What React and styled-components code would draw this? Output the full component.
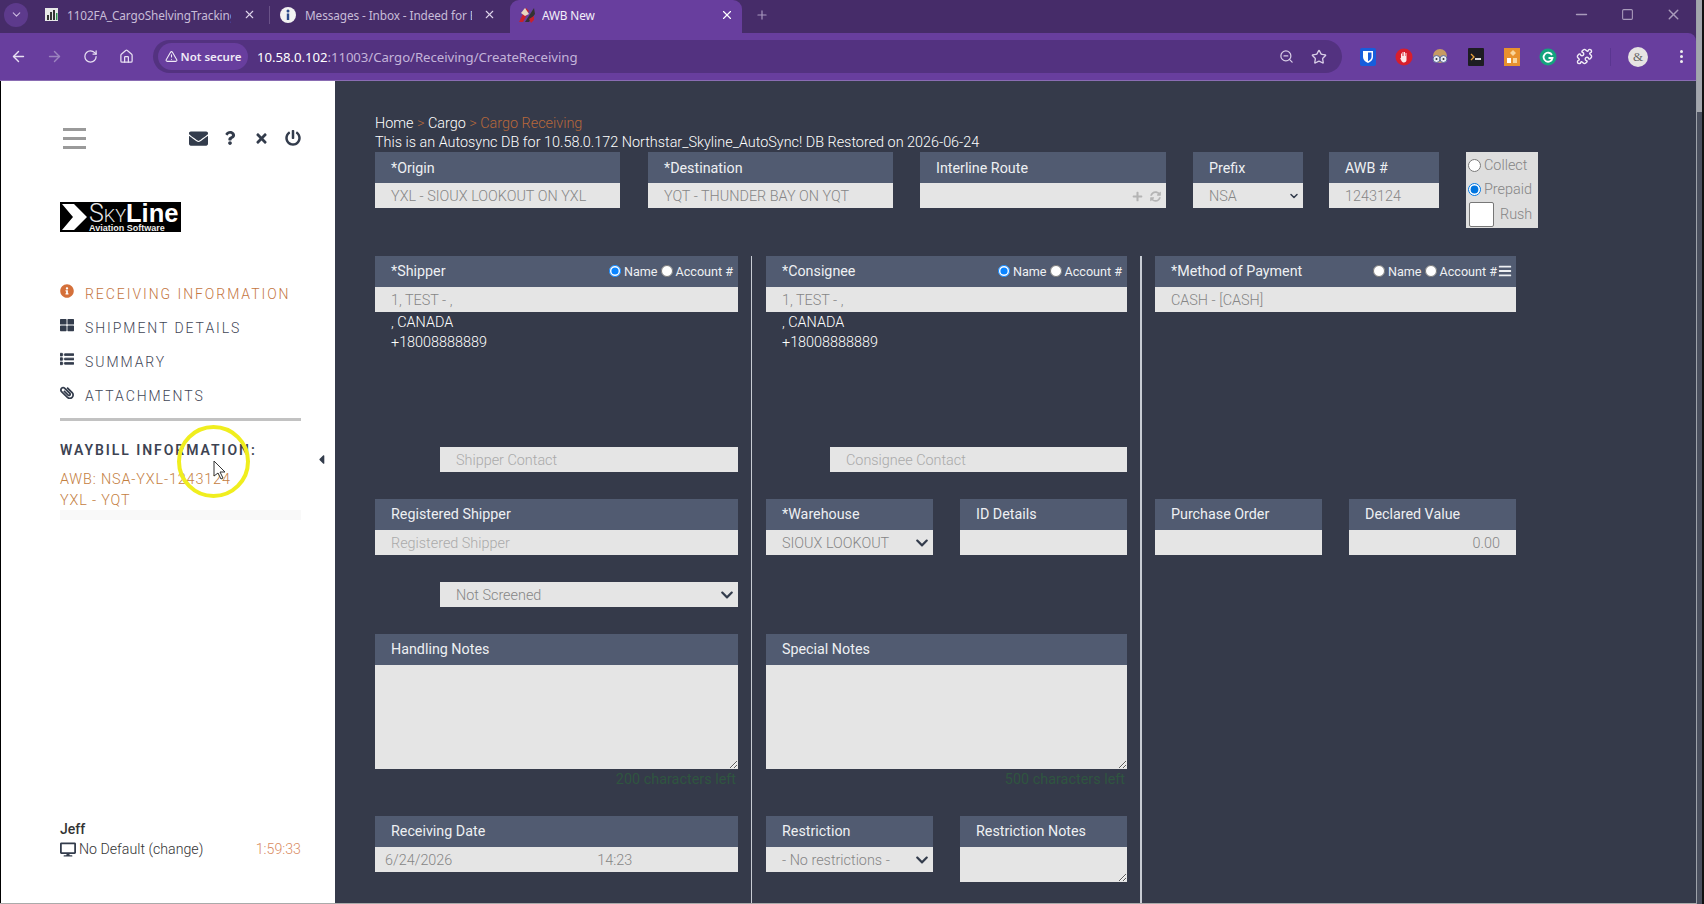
import React from 'react';
import styled, { createGlobalStyle } from 'styled-components';
import {
  FaEnvelope, FaQuestion, FaTimes, FaPowerOff, FaInfoCircle, FaThLarge, FaList, FaPaperclip,
  FaDesktop, FaCaretLeft, FaBars, FaPlus, FaSyncAlt, FaChevronDown,
} from 'react-icons/fa';
import { LuArrowLeft, LuArrowRight, LuRotateCw, LuHouse, LuTriangleAlert, LuZoomOut, LuStar, LuPuzzle, LuX, LuMinus, LuSquare, LuPlus, LuChevronDown } from 'react-icons/lu';

const Global = createGlobalStyle`
  html, body { margin: 0; padding: 0; width: 1704px; height: 904px; overflow: hidden; background: #353a4a; }
  * { box-sizing: border-box; }
  body { font-family: Roboto, "Liberation Sans", sans-serif; }
`;

const Screen = styled.div`
  width: 1704px;
  height: 904px;
  display: flex;
  position: relative;
`;

const Shell = styled.div`
  flex: 1;
  min-width: 0;
  display: flex;
  flex-direction: column;
  background: #462c69;
`;

const ScreenEdge = styled.div`
  width: 8px;
  flex: none;
  background: #4a4f5e;
  border-left: 1px solid #9ea2aa;
  border-right: 2px solid #111;
`;

const EdgeThumb = styled.div`
  height: 112px;
  background: #a3a6ad;
`;

/* browser chrome */
const TabStrip = styled.div`
  height: 33px;
  background: #462c69;
  display: flex;
  align-items: center;
  padding-left: 4px;
  font-family: "Noto Sans", sans-serif;
  font-size: 11.8px;
  color: #d6cbe2;
`;

const TabSearch = styled.div`
  width: 24px;
  height: 24px;
  border-radius: 50%;
  background: #5d3a8c;
  color: #cbb9e0;
  display: flex;
  align-items: center;
  justify-content: center;
  margin: 0 11px 4px 0;
`;

const Tab = styled.div`
  width: ${p => p.$w}px;
  height: 33px;
  display: flex;
  align-items: center;
  padding: 0 0 4px ${p => p.$pl || 4}px;
  background: ${p => (p.$active ? '#683e9e' : 'transparent')};
  color: ${p => (p.$active ? '#f3eefa' : '#c8bcd8')};
  border-radius: ${p => (p.$active ? '9px 9px 0 0' : '0')};
`;

const TabSep = styled.div`
  width: 1px;
  height: 18px;
  margin-bottom: 4px;
  background: #6a5288;
  flex: none;
`;

const TabTitle = styled.span`
  flex: 1;
  margin-left: ${p => p.$ml || 8}px;
  margin-right: ${p => p.$mr || 0}px;
  white-space: nowrap;
  overflow: hidden;
  letter-spacing: -0.1px;
`;

const TabClose = styled.span`
  display: flex;
  margin-right: ${p => p.$mr || 10}px;
  color: ${p => (p.$active ? '#fff' : '#ddd3ea')};
`;

const NewTab = styled.span`
  display: flex;
  margin: 0 0 4px 13px;
  color: #a898bf;
`;

const WindowControls = styled.div`
  margin: 0 0 4px auto;
  display: flex;
  align-items: center;
  gap: 31px;
  padding-right: 14px;
  color: #a99bbb;
`;

const Toolbar = styled.div`
  height: 48px;
  background: #683e9e;
  border-bottom: 1px solid #8a6cb3;
  border-top-right-radius: 8px;
  display: flex;
  align-items: center;
  padding: 0 12px 0 10px;
  color: #e8e0f2;
  font-family: "Noto Sans", sans-serif;
`;

const NavIcons = styled.div`
  display: flex;
  align-items: center;
  gap: 19px;
  width: 143px;
`;

const NavBtn = styled.span`
  width: 17px;
  display: flex;
  justify-content: center;
  color: ${p => (p.$dim ? '#9c84bf' : 'inherit')};
`;

const Omnibox = styled.div`
  width: 1189px;
  height: 33px;
  border-radius: 17px;
  background: #533280;
  display: flex;
  align-items: center;
  padding: 0 15px 0 5px;
`;

const SecurePill = styled.div`
  height: 27px;
  width: 90px;
  border-radius: 14px;
  background: #683e9e;
  display: flex;
  align-items: center;
  justify-content: center;
  gap: 3px;
  font-size: 11.5px;
  font-weight: 600;
  color: #f0eaf7;
`;

const Url = styled.div`
  margin-left: 9px;
  font-size: 13.2px;
  letter-spacing: -0.05px;
  color: #c4b4da;
  flex: 1;
  b { font-weight: 400; color: #fff; }
`;

const OmniIcons = styled.div`
  display: flex;
  align-items: center;
  gap: 17px;
  color: #d8cde6;
`;

const Extensions = styled.div`
  margin-left: 17px;
  display: flex;
  align-items: center;
  gap: 18px;
`;

const Ext = styled.div`
  width: 18px;
  height: 18px;
  display: flex;
  align-items: center;
  justify-content: center;
`;

const ToolSep = styled.div`
  width: 1px;
  height: 18px;
  background: #5a3690;
  margin: 0 17px;
`;

const Avatar = styled.div`
  width: 20px;
  height: 20px;
  border-radius: 50%;
  background: #e6e3e3;
  color: #666;
  font-size: 13px;
  text-align: center;
  line-height: 20px;
  margin-right: 32px;
  font-family: "Liberation Serif", serif;
`;

const Kebab = styled.div`
  display: flex;
  flex-direction: column;
  gap: 2px;
  i { width: 3px; height: 3px; border-radius: 50%; background: #eee; display: block; }
`;

/* page */
const Page = styled.div`
  flex: 1;
  min-height: 0;
  display: flex;
  border-bottom: 1px solid #aaa;
`;

const Sidebar = styled.aside`
  width: 335px;
  background: #fff;
  border-left: 1px solid #000;
  padding: 42px 34px 44px 59px;
  display: flex;
  flex-direction: column;
  position: relative;
`;

const TopIcons = styled.div`
  height: 30px;
  display: flex;
  align-items: center;
  color: #333c4c;
`;

const Hamburger = styled.div`
  width: 23px;
  margin: 0 auto 0 3px;
  display: flex;
  flex-direction: column;
  gap: 6px;
  i { height: 3px; background: #9a9a9a; display: block; }
`;

const IconSlot = styled.span`
  display: flex;
  margin-left: ${p => p.$ml || 0}px;
  font-size: ${p => p.$size}px;
`;

const Logo = styled.div`
  width: 121px;
  height: 30px;
  margin-top: 49px;
  background: #000;
  color: #fff;
  display: flex;
  svg { flex: none; margin-left: 1px; }
`;

const LogoText = styled.div`
  font-family: "Liberation Sans", sans-serif;
  margin: 1px 0 0 -1px;
  display: flex;
  flex-direction: column;
`;

const LogoName = styled.div`
  height: 21px;
  display: flex;
  align-items: baseline;
  font-family: Roboto, sans-serif;
  font-weight: 300;
  font-size: 18px;
  line-height: 21px;
  color: #e8e8e8;
  big { font-size: 25px; font-weight: 300; line-height: 21px; }
  b { font-family: "Liberation Sans", sans-serif; font-size: 25.5px; line-height: 21px; font-weight: 700; color: #fff; }
`;

const LogoSub = styled.div`
  font-size: 9px;
  line-height: 8px;
  font-weight: 700;
  color: #eee;
  white-space: nowrap;
`;

const Nav = styled.nav`
  margin-top: 52px;
  display: flex;
  flex-direction: column;
  gap: 14px;
`;

const NavItem = styled.div`
  height: 20px;
  display: flex;
  align-items: center;
  font-size: 14px;
  font-weight: 300;
  letter-spacing: 1.95px;
  color: ${p => (p.$active ? '#c4763f' : '#3f4656')};
  svg { color: ${p => (p.$active ? '#d4703a' : '#333c4c')}; flex: none; width: 14px; height: 14px; margin-right: 11px; position: relative; top: -3px; }
`;

const Clip = styled(FaPaperclip)`
  transform: rotate(-90deg);
`;

const HeavyList = styled(FaList)`
  stroke: currentColor;
  stroke-width: 30;
`;

const Rule = styled.hr`
  margin: 12px 0 0;
  border: 0;
  height: 3px;
  background: #c2c2c2;
`;

const WaybillTitle = styled.div`
  margin-top: 21px;
  font-size: 14px;
  font-weight: 600;
  letter-spacing: 1.95px;
  color: #3d4352;
  white-space: nowrap;
`;

const WaybillLine = styled.div`
  font-size: 14.4px;
  line-height: 21px;
  font-weight: 300;
  letter-spacing: 0.85px;
  color: #c4803f;
`;

const WaybillLines = styled.div`
  margin-top: 11px;
`;

const FaintBar = styled.div`
  height: 10px;
  margin-top: -1px;
  background: #f9f9f9;
`;

const Footer = styled.div`
  margin-top: auto;
`;

const UserName = styled.div`
  font-size: 14px;
  font-weight: 500;
  color: #333;
  line-height: 20px;
`;

const StationRow = styled.div`
  display: flex;
  align-items: center;
  font-size: 14.2px;
  font-weight: 300;
  line-height: 20px;
  color: #333;
  svg { width: 16px; height: 15px; margin-right: 3px; color: #333c4c; }
`;

const Timer = styled.span`
  margin-left: auto;
  color: #d98b5f;
`;

const Collapse = styled.div`
  position: absolute;
  left: 313px;
  top: 371px;
  display: flex;
  color: #333c4c;
  font-size: 15px;
`;

const Highlight = styled.div`
  position: absolute;
  left: 177px;
  top: 425px;
  width: 73px;
  height: 73px;
  border-radius: 50%;
  border: 4px solid #f0ee1e;
  pointer-events: none;
`;

const Pointer = styled.svg`
  position: absolute;
  left: 213px;
  top: 460px;
`;

const Main = styled.main`
  flex: 1;
  background: #353a4a;
  padding: 33px 0 0 40px;
  display: flex;
  flex-direction: column;
  color: #fff;
  font-size: 14.4px;
  font-weight: 300;
`;

const Crumbs = styled.div`
  line-height: 20px;
  span { color: #b8683a; }
`;

const Notice = styled.div`
  line-height: 18px;
  white-space: nowrap;
`;

const TopRow = styled.div`
  display: flex;
  align-items: flex-start;
  height: 76px;
  margin-bottom: 28px;
`;

const Field = styled.div`
  width: ${p => (p.$w ? `${p.$w}px` : 'auto')};
  flex: ${p => (p.$w ? 'none' : '1')};
  margin-left: ${p => p.$ml || 0}px;
`;

const FieldHead = styled.div`
  height: 31px;
  background: #515b71;
  color: #eef0f3;
  display: flex;
  align-items: center;
  padding: ${p => (p.$low ? '1px' : '0')} 5px ${p => (p.$low ? '0' : '1px')} 16px;
  font-weight: 400;
  font-size: 14.3px;
`;

const FieldLabel = styled.span`
  margin-right: auto;
`;

const FieldValue = styled.div`
  height: 25px;
  background: #e5e5e5;
  display: flex;
  align-items: center;
  padding: 1px ${p => p.$pr || 0}px 0 ${p => p.$pl || 16}px;
  color: ${p => (p.$faint ? '#aaa' : '#868686')};
  font-size: 14.4px;
  font-weight: 300;
  justify-content: ${p => (p.$right ? 'flex-end' : 'flex-start')};
  white-space: nowrap;
`;

const FieldTrail = styled.span`
  margin-left: auto;
  display: flex;
  align-items: center;
  gap: 7px;
  color: ${p => p.$color || '#333c4c'};
  font-size: ${p => p.$size || 14}px;
`;

const DateTime = styled.span`
  margin-left: ${p => p.$ml}px;
`;

const ChoiceBox = styled.div`
  width: 72px;
  height: 76px;
  margin-left: 27px;
  background: #dedede;
  color: #858585;
  font-size: 14.4px;
  padding: 1px 0 0 2px;
`;

const ChoiceRow = styled.label`
  display: flex;
  align-items: center;
  height: 24px;
  gap: 3px;
  input { margin: 0; width: 13px; height: 13px; accent-color: #0075e0; }
`;

const RushBox = styled.input`
  width: 25px;
  height: 25px;
  margin: 1px 6px 0 1px;
  appearance: none;
  background: #fff;
  border: 1px solid #777;
  border-radius: 2px;
`;

const RushRow = styled.div`
  display: flex;
  align-items: center;
  height: 26px;
`;

const Columns = styled.div`
  flex: 1;
  display: flex;
  align-items: stretch;
`;

const Column = styled.div`
  width: ${p => p.$w}px;
  padding: 0 ${p => p.$pr || 0}px 0 ${p => p.$pl || 0}px;
  border-right: ${p => (p.$line ? `${p.$line}px solid #c8ccd4` : '0')};
  box-sizing: content-box;
`;

const Radios = styled.div`
  display: flex;
  align-items: center;
  font-size: 12.6px;
  font-weight: 400;
  color: #eef0f3;
`;

const Radio = styled.input`
  width: 12px;
  height: 12px;
  margin: 0 3px 0 ${p => p.$ml || 0}px;
  accent-color: #0a84ff;
`;

const BarsIcon = styled.span`
  display: flex;
  margin: 0 -1px 0 1px;
`;

const Address = styled.div`
  height: 40px;
  padding: 1px 0 0 16px;
  line-height: 20px;
  font-weight: 300;
  font-size: 14.4px;
`;

const Indented = styled.div`
  margin: ${p => p.$top || 0}px 0 0 auto;
  width: ${p => p.$w}px;
`;

const Row = styled.div`
  display: flex;
  gap: 27px;
  margin-top: ${p => p.$top || 0}px;
`;

const Block = styled.div`
  margin-top: ${p => p.$top || 0}px;
`;

const Notes = styled.textarea`
  display: block;
  width: 100%;
  height: ${p => p.$h}px;
  background: #e5e5e5;
  border: 0;
  border-radius: 0;
  outline: 0;
  margin: 0;
  resize: vertical;
`;

const CharsLeft = styled.div`
  height: 20px;
  line-height: 21px;
  padding-right: 2px;
  text-align: right;
  font-size: 14.4px;
  font-weight: 400;
  color: #2f5540;
`;

const BitwardenIcon = () => (
  <svg width="16" height="18" viewBox="0 0 16 18">
    <rect width="16" height="18" rx="2" fill="#175ddc" />
    <path d="M3 3h10v6c0 3-2.5 5-5 6-2.500-1-5-3-5-6z" fill="#fff" />
    <path d="M8 4.500h3.500V9c0 2-1.800 3.300-3.500 4.200z" fill="#175ddc" />
  </svg>
);

const BlockerIcon = () => (
  <svg width="18" height="18" viewBox="0 0 18 18">
    <circle cx="9" cy="9" r="8.500" fill="#d81e2c" />
    <path d="M6 9V5.500h1V8h.5V4h1v4H9V4h1v4h.5V5h1v7c0 1.500-1 2.500-2.500 2.500-1.300 0-2-.6-2.600-1.800L5 10l1 .2z" fill="#fde8e8" />
  </svg>
);

const OwlIcon = () => (
  <svg width="18" height="18" viewBox="0 0 18 18">
    <circle cx="9" cy="8" r="7" fill="#c79a63" />
    <circle cx="5.500" cy="11" r="3.500" fill="#e8eaf2" stroke="#5a6a9a" />
    <circle cx="12.500" cy="11" r="3.500" fill="#e8eaf2" stroke="#5a6a9a" />
    <circle cx="5.500" cy="11" r="1" fill="#333" />
    <circle cx="12.500" cy="11" r="1" fill="#333" />
  </svg>
);

const TerminalIcon = () => (
  <svg width="16" height="18" viewBox="0 0 16 18">
    <rect width="16" height="18" rx="1" fill="#1d1d22" />
    <path d="M3 6l3 3-3 3" stroke="#e8a23c" strokeWidth="1.300" fill="none" />
    <rect x="7" y="10" width="6" height="2" fill="#ddd" />
  </svg>
);

const OrangeIcon = () => (
  <svg width="16" height="18" viewBox="0 0 16 18">
    <rect width="16" height="18" fill="#e8912d" />
    <path d="M9 2l3 3-3 3-3-3z" fill="#f9d59b" />
    <rect x="3" y="10" width="4" height="5" fill="#fff" />
    <rect x="9" y="10" width="4" height="5" fill="#f9d59b" />
  </svg>
);

const GrammarlyIcon = () => (
  <svg width="18" height="18" viewBox="0 0 18 18">
    <circle cx="9" cy="9" r="8.500" fill="#15a37e" />
    <path d="M13 7a4.500 4.500 0 1 0 .5 3H9.500" stroke="#fff" strokeWidth="1.800" fill="none" />
  </svg>
);

const SheetFavicon = () => (
  <svg width="15" height="15" viewBox="0 0 15 15">
    <rect x="1" y="1" width="13" height="13" fill="#e8e8e8" />
    <rect x="3" y="8" width="2" height="5" fill="#333" />
    <rect x="6" y="5" width="2" height="8" fill="#333" />
    <rect x="9" y="3" width="2" height="10" fill="#333" />
    <rect x="12" y="6" width="1.500" height="7" fill="#2f8f4e" />
  </svg>
);

const InfoFavicon = () => (
  <svg width="16" height="16" viewBox="0 0 16 16">
    <circle cx="8" cy="8" r="8" fill="#f2f2f2" />
    <circle cx="8" cy="4" r="1.500" fill="#2a4a8a" />
    <rect x="6.800" y="6.500" width="2.400" height="6.500" fill="#2a4a8a" />
  </svg>
);

const AwbFavicon = () => (
  <svg width="18" height="18" viewBox="0 0 18 18">
    <path d="M1 16L8 2l3 3-6 11z" fill="#c8202c" />
    <path d="M7 16l9-14 1 6-6 8z" fill="#333" />
    <path d="M3 7l4-5 4 6-4 2z" fill="#e8d8c0" />
    <path d="M11 13l5-3v4l-3 3z" fill="#c8202c" />
  </svg>
);

const App = () => (
  <Screen>
    <Global />
    <Shell>
      <TabStrip>
        <TabSearch><LuChevronDown size={13} /></TabSearch>
        <Tab $w={230} $pl={5}>
          <SheetFavicon />
          <TabTitle $mr={12}>1102FA_CargoShelvingTracking</TabTitle>
          <TabClose $mr={13}><LuX size={13} /></TabClose>
        </Tab>
        <TabSep />
        <Tab $w={240} $pl={10}>
          <InfoFavicon />
          <TabTitle $ml={9} $mr={11}>Messages - Inbox - Indeed for E</TabTitle>
          <TabClose $mr={14}><LuX size={13} /></TabClose>
        </Tab>
        <Tab $w={232} $pl={8} $active>
          <AwbFavicon />
          <TabTitle $ml={6}>AWB New</TabTitle>
          <TabClose $mr={8} $active><LuX size={14} /></TabClose>
        </Tab>
        <NewTab><LuPlus size={14} /></NewTab>
        <WindowControls>
          <LuMinus size={17} />
          <LuSquare size={13} />
          <LuX size={17} />
        </WindowControls>
      </TabStrip>
      <Toolbar>
        <NavIcons>
          <NavBtn><LuArrowLeft size={17} /></NavBtn>
          <NavBtn $dim><LuArrowRight size={17} /></NavBtn>
          <NavBtn><LuRotateCw size={15} /></NavBtn>
          <NavBtn><LuHouse size={15} /></NavBtn>
        </NavIcons>
        <Omnibox>
          <SecurePill><LuTriangleAlert size={13} />Not secure</SecurePill>
          <Url><b>10.58.0.102</b>:11003/Cargo/Receiving/CreateReceiving</Url>
          <OmniIcons>
            <LuZoomOut size={15} />
            <LuStar size={16} />
          </OmniIcons>
        </Omnibox>
        <Extensions>
          <Ext><BitwardenIcon /></Ext>
          <Ext><BlockerIcon /></Ext>
          <Ext><OwlIcon /></Ext>
          <Ext><TerminalIcon /></Ext>
          <Ext><OrangeIcon /></Ext>
          <Ext><GrammarlyIcon /></Ext>
          <Ext><LuPuzzle size={17} color="#f0ebf6" /></Ext>
        </Extensions>
        <ToolSep />
        <Avatar>&amp;</Avatar>
        <Kebab><i /><i /><i /></Kebab>
      </Toolbar>
      <Page>
        <Sidebar>
          <TopIcons>
            <Hamburger><i /><i /><i /></Hamburger>
            <IconSlot $size={19}><FaEnvelope /></IconSlot>
            <IconSlot $size={14} $ml={15}><FaQuestion /></IconSlot>
            <IconSlot $size={15} $ml={17}><FaTimes /></IconSlot>
            <IconSlot $size={16} $ml={16}><FaPowerOff /></IconSlot>
          </TopIcons>
          <Logo>
            <svg width="29" height="30" viewBox="0 0 29 30">
              <path d="M1 2h12l13 13-13 13H1l11-13z" fill="#fff" />
            </svg>
            <LogoText>
              <LogoName><big>S</big>KY<b>Line</b></LogoName>
              <LogoSub>Aviation Software</LogoSub>
            </LogoText>
          </Logo>
          <Nav>
            <NavItem $active><FaInfoCircle />RECEIVING INFORMATION</NavItem>
            <NavItem><FaThLarge />SHIPMENT DETAILS</NavItem>
            <NavItem><HeavyList />SUMMARY</NavItem>
            <NavItem><Clip />ATTACHMENTS</NavItem>
          </Nav>
          <Rule />
          <WaybillTitle>WAYBILL INFORMATION:</WaybillTitle>
          <WaybillLines>
            <WaybillLine>AWB: NSA-YXL-1243124</WaybillLine>
            <WaybillLine>YXL - YQT</WaybillLine>
          </WaybillLines>
          <FaintBar />
          <Footer>
            <UserName>Jeff</UserName>
            <StationRow><FaDesktop />No Default (change)<Timer>1:59:33</Timer></StationRow>
          </Footer>
          <Collapse><FaCaretLeft /></Collapse>
        </Sidebar>
        <Main>
          <Crumbs>Home <span>&gt;</span> Cargo <span>&gt; Cargo Receiving</span></Crumbs>
          <Notice>This is an Autosync DB for 10.58.0.172 Northstar_Skyline_AutoSync! DB Restored on 2026-06-24</Notice>
          <TopRow>
            <Field $w={245}>
              <FieldHead $low>*Origin</FieldHead>
              <FieldValue>YXL - SIOUX LOOKOUT ON YXL</FieldValue>
            </Field>
            <Field $w={245} $ml={28}>
              <FieldHead $low>*Destination</FieldHead>
              <FieldValue>YQT - THUNDER BAY ON YQT</FieldValue>
            </Field>
            <Field $w={246} $ml={27}>
              <FieldHead $low>Interline Route</FieldHead>
              <FieldValue $pr={5}>
                <FieldTrail $color="#b4b4b4" $size={11}><FaPlus /><FaSyncAlt /></FieldTrail>
              </FieldValue>
            </Field>
            <Field $w={110} $ml={27}>
              <FieldHead $low>Prefix</FieldHead>
              <FieldValue $pr={3}>NSA<FieldTrail><LuChevronDown size={12} strokeWidth={3} /></FieldTrail></FieldValue>
            </Field>
            <Field $w={110} $ml={26}>
              <FieldHead $low>AWB #</FieldHead>
              <FieldValue>1243124</FieldValue>
            </Field>
            <ChoiceBox>
              <ChoiceRow><input type="radio" name="pay" />Collect</ChoiceRow>
              <ChoiceRow><input type="radio" name="pay" defaultChecked />Prepaid</ChoiceRow>
              <RushRow><RushBox type="checkbox" />Rush</RushRow>
            </ChoiceBox>
          </TopRow>
          <Columns>
            <Column $w={363} $pr={13} $line={1}>
              <Field>
                <FieldHead>
                  <FieldLabel>*Shipper</FieldLabel>
                  <Radios>
                    <Radio type="radio" name="s" defaultChecked />Name
                    <Radio type="radio" name="s" $ml={3} />Account #
                  </Radios>
                </FieldHead>
                <FieldValue>1, TEST - ,</FieldValue>
              </Field>
              <Address>, CANADA<br />+18008888889</Address>
              <Indented $w={298} $top={95}><FieldValue $faint>Shipper Contact</FieldValue></Indented>
              <Block $top={27}>
                <FieldHead>Registered Shipper</FieldHead>
                <FieldValue $faint>Registered Shipper</FieldValue>
              </Block>
              <Indented $w={298} $top={27}>
                <FieldValue $pr={4}>Not Screened<FieldTrail><FaChevronDown /></FieldTrail></FieldValue>
              </Indented>
              <Block $top={27}>
                <FieldHead>Handling Notes</FieldHead>
                <Notes $h={104} />
                <CharsLeft>200 characters left</CharsLeft>
              </Block>
              <Block $top={27}>
                <FieldHead>Receiving Date</FieldHead>
                <FieldValue $pl={10}>6/24/2026<DateTime $ml={145}>14:23</DateTime></FieldValue>
              </Block>
            </Column>
            <Column $w={361} $pl={14} $pr={13} $line={2}>
              <Field>
                <FieldHead>
                  <FieldLabel>*Consignee</FieldLabel>
                  <Radios>
                    <Radio type="radio" name="c" defaultChecked />Name
                    <Radio type="radio" name="c" $ml={3} />Account #
                  </Radios>
                </FieldHead>
                <FieldValue>1, TEST - ,</FieldValue>
              </Field>
              <Address>, CANADA<br />+18008888889</Address>
              <Indented $w={297} $top={95}><FieldValue $faint>Consignee Contact</FieldValue></Indented>
              <Row $top={27}>
                <Field $w={167}>
                  <FieldHead>*Warehouse</FieldHead>
                  <FieldValue $pr={4}>SIOUX LOOKOUT<FieldTrail><FaChevronDown /></FieldTrail></FieldValue>
                </Field>
                <Field $w={167}>
                  <FieldHead>ID Details</FieldHead>
                  <FieldValue />
                </Field>
              </Row>
              <Block $top={79}>
                <FieldHead>Special Notes</FieldHead>
                <Notes $h={104} />
                <CharsLeft>500 characters left</CharsLeft>
              </Block>
              <Row $top={27}>
                <Field $w={167}>
                  <FieldHead>Restriction</FieldHead>
                  <FieldValue $pr={4}>- No restrictions -<FieldTrail><FaChevronDown /></FieldTrail></FieldValue>
                </Field>
                <Field $w={167}>
                  <FieldHead>Restriction Notes</FieldHead>
                  <Notes $h={35} />
                </Field>
              </Row>
            </Column>
            <Column $w={361} $pl={13}>
              <Field>
                <FieldHead>
                  <FieldLabel>*Method of Payment</FieldLabel>
                  <Radios>
                    <Radio type="radio" name="m" />Name
                    <Radio type="radio" name="m" $ml={3} />Account #
                  </Radios>
                  <BarsIcon><FaBars size={14} /></BarsIcon>
                </FieldHead>
                <FieldValue>CASH - [CASH]</FieldValue>
              </Field>
              <Row $top={187}>
                <Field $w={167}>
                  <FieldHead>Purchase Order</FieldHead>
                  <FieldValue />
                </Field>
                <Field $w={167}>
                  <FieldHead>Declared Value</FieldHead>
                  <FieldValue $right $pr={16}>0.00</FieldValue>
                </Field>
              </Row>
            </Column>
          </Columns>
        </Main>
      </Page>
    </Shell>
    <ScreenEdge><EdgeThumb /></ScreenEdge>
    <Highlight />
    <Pointer width="14" height="20" viewBox="0 0 14 20">
      <path d="M1 1v15l4-3 3 6 2-1-3-6h5z" fill="#fff" stroke="#333" strokeWidth="1" />
    </Pointer>
  </Screen>
);

export default App;
